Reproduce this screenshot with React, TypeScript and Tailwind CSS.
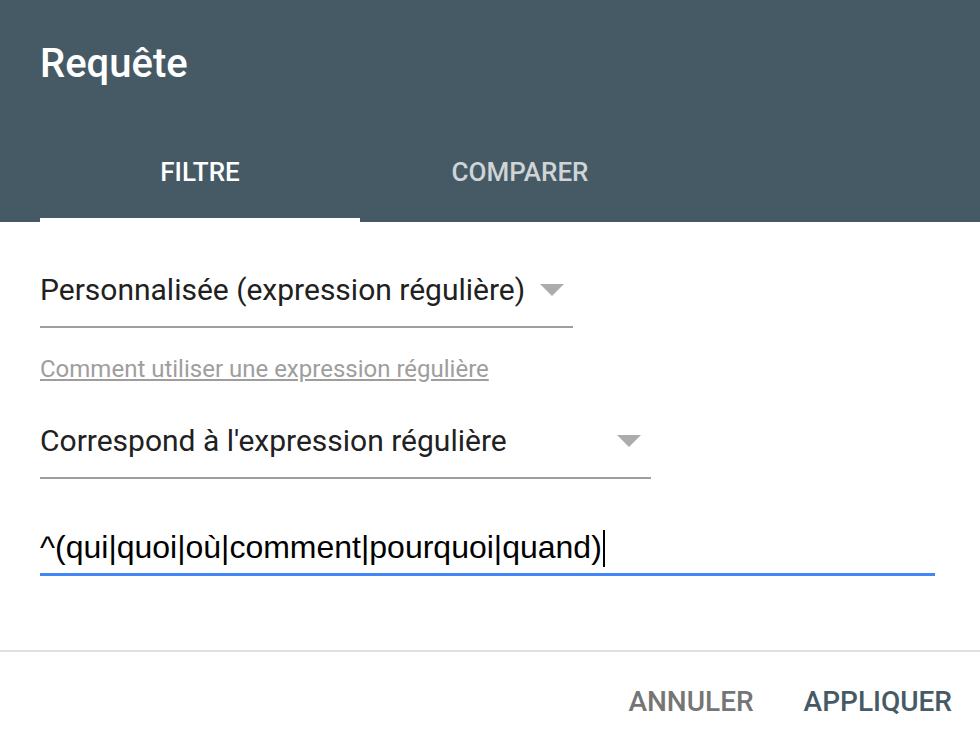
import React from "react";

const Caret = () => (
  <svg width="24" height="12" viewBox="0 0 24 12" className="shrink-0">
    <path d="M0 0 L24 0 L12 12 Z" fill="#acacac" />
  </svg>
);

export default function App() {
  return (
    <div
      className="w-[980px] h-[752px] bg-white flex flex-col overflow-hidden"
      style={{ fontFamily: "Roboto, 'Liberation Sans', sans-serif" }}
    >
      <header className="bg-[#465a65] h-[222px] flex flex-col px-10">
        <h1 className="text-white text-[40px] font-medium leading-none pt-[44px]">Requête</h1>
        <nav className="flex mt-auto">
          <div className="w-[320px] flex flex-col items-center">
            <span className="text-white text-[26px] font-medium leading-none pb-[33px]">FILTRE</span>
            <span className="h-1 w-full bg-white" />
          </div>
          <div className="w-[320px] flex flex-col items-center">
            <span className="text-[#cfd4d7] text-[26px] font-medium leading-none pb-[33px]">COMPARER</span>
            <span className="h-1 w-full" />
          </div>
        </nav>
      </header>

      <main className="flex flex-col px-10 pt-[40px]">
        <div className="flex items-center w-[533px] border-b-2 border-[#9e9e9e] h-[66px] pb-2">
          <span className="text-[30px] text-[#212121] leading-none">Personnalisée (expression régulière)</span>
          <span className="ml-[15px] flex">
            <Caret />
          </span>
        </div>
        <a className="text-[24px] text-[#9e9e9e] underline leading-none mt-[29px] w-fit">
          Comment utiliser une expression régulière
        </a>
        <div className="flex items-center justify-between w-[611px] border-b-2 border-[#9e9e9e] h-[66px] mt-[32px] pb-2 pr-[10px]">
          <span className="text-[30px] text-[#212121] leading-none">Correspond à l'expression régulière</span>
          <Caret />
        </div>
        <div className="flex items-end w-[895px] border-b-[3px] border-[#4285f4] h-[56px] mt-[41px] pb-[10px]">
          <span
            className="text-[32px] text-black leading-none"
            style={{ fontFamily: "'Liberation Sans', Arial, sans-serif" }}
          >
            ^(qui|quoi|où|comment|pourquoi|quand)
          </span>
          <span className="w-[2px] h-[37px] bg-black ml-[1px] mb-[-4px]" />
        </div>
      </main>

      <footer className="mt-auto border-t-2 border-[#e0e0e0] h-[102px] flex items-center justify-end gap-[50px] pr-[28px]">
        <span className="text-[#757575] text-[28px] font-medium leading-none">ANNULER</span>
        <span className="text-[#465a65] text-[28px] font-medium leading-none">APPLIQUER</span>
      </footer>
    </div>
  );
}
